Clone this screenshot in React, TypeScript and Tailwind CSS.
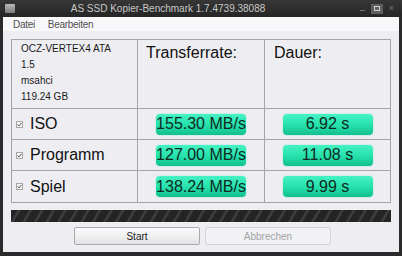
import React from "react";

const font = { fontFamily: '"Liberation Sans", Arial, sans-serif' };

const results = [
  { label: "ISO", rate: "155.30 MB/s", time: "6.92 s" },
  { label: "Programm", rate: "127.00 MB/s", time: "11.08 s" },
  { label: "Spiel", rate: "138.24 MB/s", time: "9.99 s" },
];

function CheckBox() {
  return (
    <div className="w-[7px] h-[7px] border border-[#a8a8a8] bg-[#f4f4f4] flex items-center justify-center">
      <svg width="5" height="5" viewBox="0 0 5 5">
        <path d="M0.5 2.5 L2 4 L4.5 0.8" stroke="#5a5a5a" strokeWidth="1" fill="none" />
      </svg>
    </div>
  );
}

function Pill({ children }: { children: React.ReactNode }) {
  return (
    <div className="w-[90px] h-[21px] rounded-[4px] bg-[linear-gradient(#45f2c4,#24e0aa_55%,#12bf8e)] shadow-[0_0_2px_#8fe8cc] flex items-center justify-center text-[16px] leading-none text-[#0d2a22]">
      {children}
    </div>
  );
}

export default function App() {
  return (
    <div
      className="w-[402px] h-[256px] bg-[#2a2a2a] flex flex-col px-[3px] pb-[4px] overflow-hidden"
      style={font}
    >
      {/* title bar */}
      <div className="h-[17px] flex items-center relative bg-[linear-gradient(#363636,#262626)] -mx-[3px] px-[5px]">
        <div className="w-[10px] h-[9px] bg-[linear-gradient(#b8b8b8,#7a7a7a)] rounded-[1px]" />
        <div className="flex-1 text-center text-[10px] text-[#c8c8c8] pr-[36px]">
          AS SSD Kopier-Benchmark 1.7.4739.38088
        </div>
        <div className="flex items-center gap-[3px]">
          <div className="w-[11px] h-[9px] flex items-end justify-center pb-[2px]">
            <div className="w-[5px] h-[1px] bg-[#777]" />
          </div>
          <div className="w-[12px] h-[10px] bg-[#606060] flex items-center justify-center">
            <div className="w-[6px] h-[5px] border border-[#d0d0d0]" />
          </div>
          <div className="w-[11px] h-[9px] flex items-center justify-center text-[9px] leading-none text-[#7a7a7a]">
            ×
          </div>
        </div>
      </div>

      <div className="flex-1 flex flex-col bg-[#eeeef2]">
        {/* menu */}
        <div className="h-[14px] bg-[#f8f8fa] flex items-center gap-[13px] pl-[10px] text-[10px] text-[#505050] tracking-[-0.3px]">
          <span>Datei</span>
          <span>Bearbeiten</span>
        </div>

        {/* table */}
        <div className="mt-[8px] ml-[8px] w-[380px] border border-[#a4a4a8] grid grid-cols-[126px_127px_125px] grid-rows-[69px_31px_31px_31px]">
          <div className="border-r border-b border-[#a4a4a8] pl-[9px] pt-[1px] text-[10px] leading-[16px] text-[#1a1a1a]">
            <div>OCZ-VERTEX4 ATA</div>
            <div>1.5</div>
            <div>msahci</div>
            <div>119.24 GB</div>
          </div>
          <div className="border-r border-b border-[#a4a4a8] pl-[8px] pt-[1px] text-[16px] text-[#111]">
            Transferrate:
          </div>
          <div className="border-b border-[#a4a4a8] pl-[9px] pt-[1px] text-[16px] text-[#111]">
            Dauer:
          </div>

          {results.map((r, i) => {
            const last = i === results.length - 1;
            const b = last ? "" : "border-b";
            return (
              <React.Fragment key={r.label}>
                <div className={`${b} border-r border-[#a4a4a8] flex items-center pl-[4px] gap-[7px] text-[16px] text-[#111]`}>
                  <CheckBox />
                  <span>{r.label}</span>
                </div>
                <div className={`${b} border-r border-[#a4a4a8] flex items-center justify-center`}>
                  <Pill>{r.rate}</Pill>
                </div>
                <div className={`${b} border-[#a4a4a8] flex items-center justify-center`}>
                  <Pill>{r.time}</Pill>
                </div>
              </React.Fragment>
            );
          })}
        </div>

        {/* progress */}
        <div className="mt-[7px] ml-[8px] w-[380px] h-[12px] bg-[#262626] bg-[repeating-linear-gradient(-60deg,#242424_0px,#242424_6px,#444444_8px,#242424_10px)]" />

        {/* buttons */}
        <div className="mt-[5px] flex justify-center gap-[5px] pl-[3px] text-[10px]">
          <div className="w-[126px] h-[18px] rounded-[2px] border border-[#a9a9ad] bg-[linear-gradient(#fbfbfb,#f0f0f0_50%,#e2e2e4)] flex items-center justify-center text-[#1a1a1a]">
            Start
          </div>
          <div className="w-[126px] h-[18px] rounded-[2px] border border-[#d4d4d8] bg-[#f2f2f4] flex items-center justify-center text-[#a2a2a6]">
            Abbrechen
          </div>
        </div>
      </div>
    </div>
  );
}
